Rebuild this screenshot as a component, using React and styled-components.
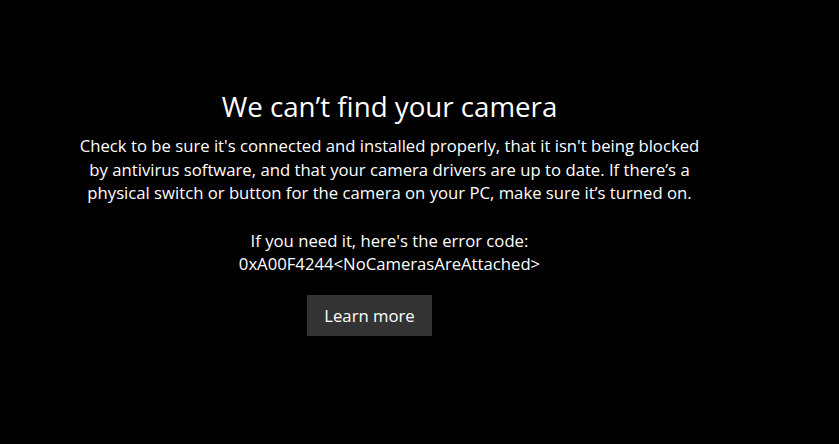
import styled, { createGlobalStyle } from "styled-components";

const GlobalStyle = createGlobalStyle`
    html, body {
        margin: 0;
        padding: 0;
        background: #000;
    }
    body {
        font-family: "Open Sans", "Noto Sans", sans-serif;
        color: #fff;
    }
`;

const Screen = styled.div`
    width: 839px;
    height: 444px;
    background: #000;
    overflow: hidden;
`;

const Content = styled.div`
    width: 779px;
    display: flex;
    flex-direction: column;
    align-items: center;
    padding-top: 88px;
    text-align: center;
`;

const Title = styled.h1`
    margin: 0;
    font-size: 27.7px;
    font-weight: 400;
    line-height: 36px;
`;

const Message = styled.p`
    margin: 10px 0 0;
    font-size: 16.7px;
    line-height: 23.6px;
`;

const ErrorCode = styled.p`
    margin: 24px 0 0;
    font-size: 16.7px;
    line-height: 23.6px;
`;

const LearnMore = styled.button`
    margin: 19px 0 0 -40px;
    width: 125px;
    height: 41px;
    border: none;
    background: #333333;
    color: #fff;
    font-family: inherit;
    font-size: 16.7px;
    cursor: pointer;
`;

export default function App() {
    return (
        <Screen>
            <GlobalStyle />
            <Content>
                <Title>We can’t find your camera</Title>
                <Message>
                    Check to be sure it's connected and installed properly, that it isn't being blocked
                    <br />
                    by antivirus software, and that your camera drivers are up to date. If there’s a
                    <br />
                    physical switch or button for the camera on your PC, make sure it’s turned on.
                </Message>
                <ErrorCode>
                    If you need it, here's the error code:
                    <br />
                    0xA00F4244&lt;NoCamerasAreAttached&gt;
                </ErrorCode>
                <LearnMore>Learn more</LearnMore>
            </Content>
        </Screen>
    );
}
